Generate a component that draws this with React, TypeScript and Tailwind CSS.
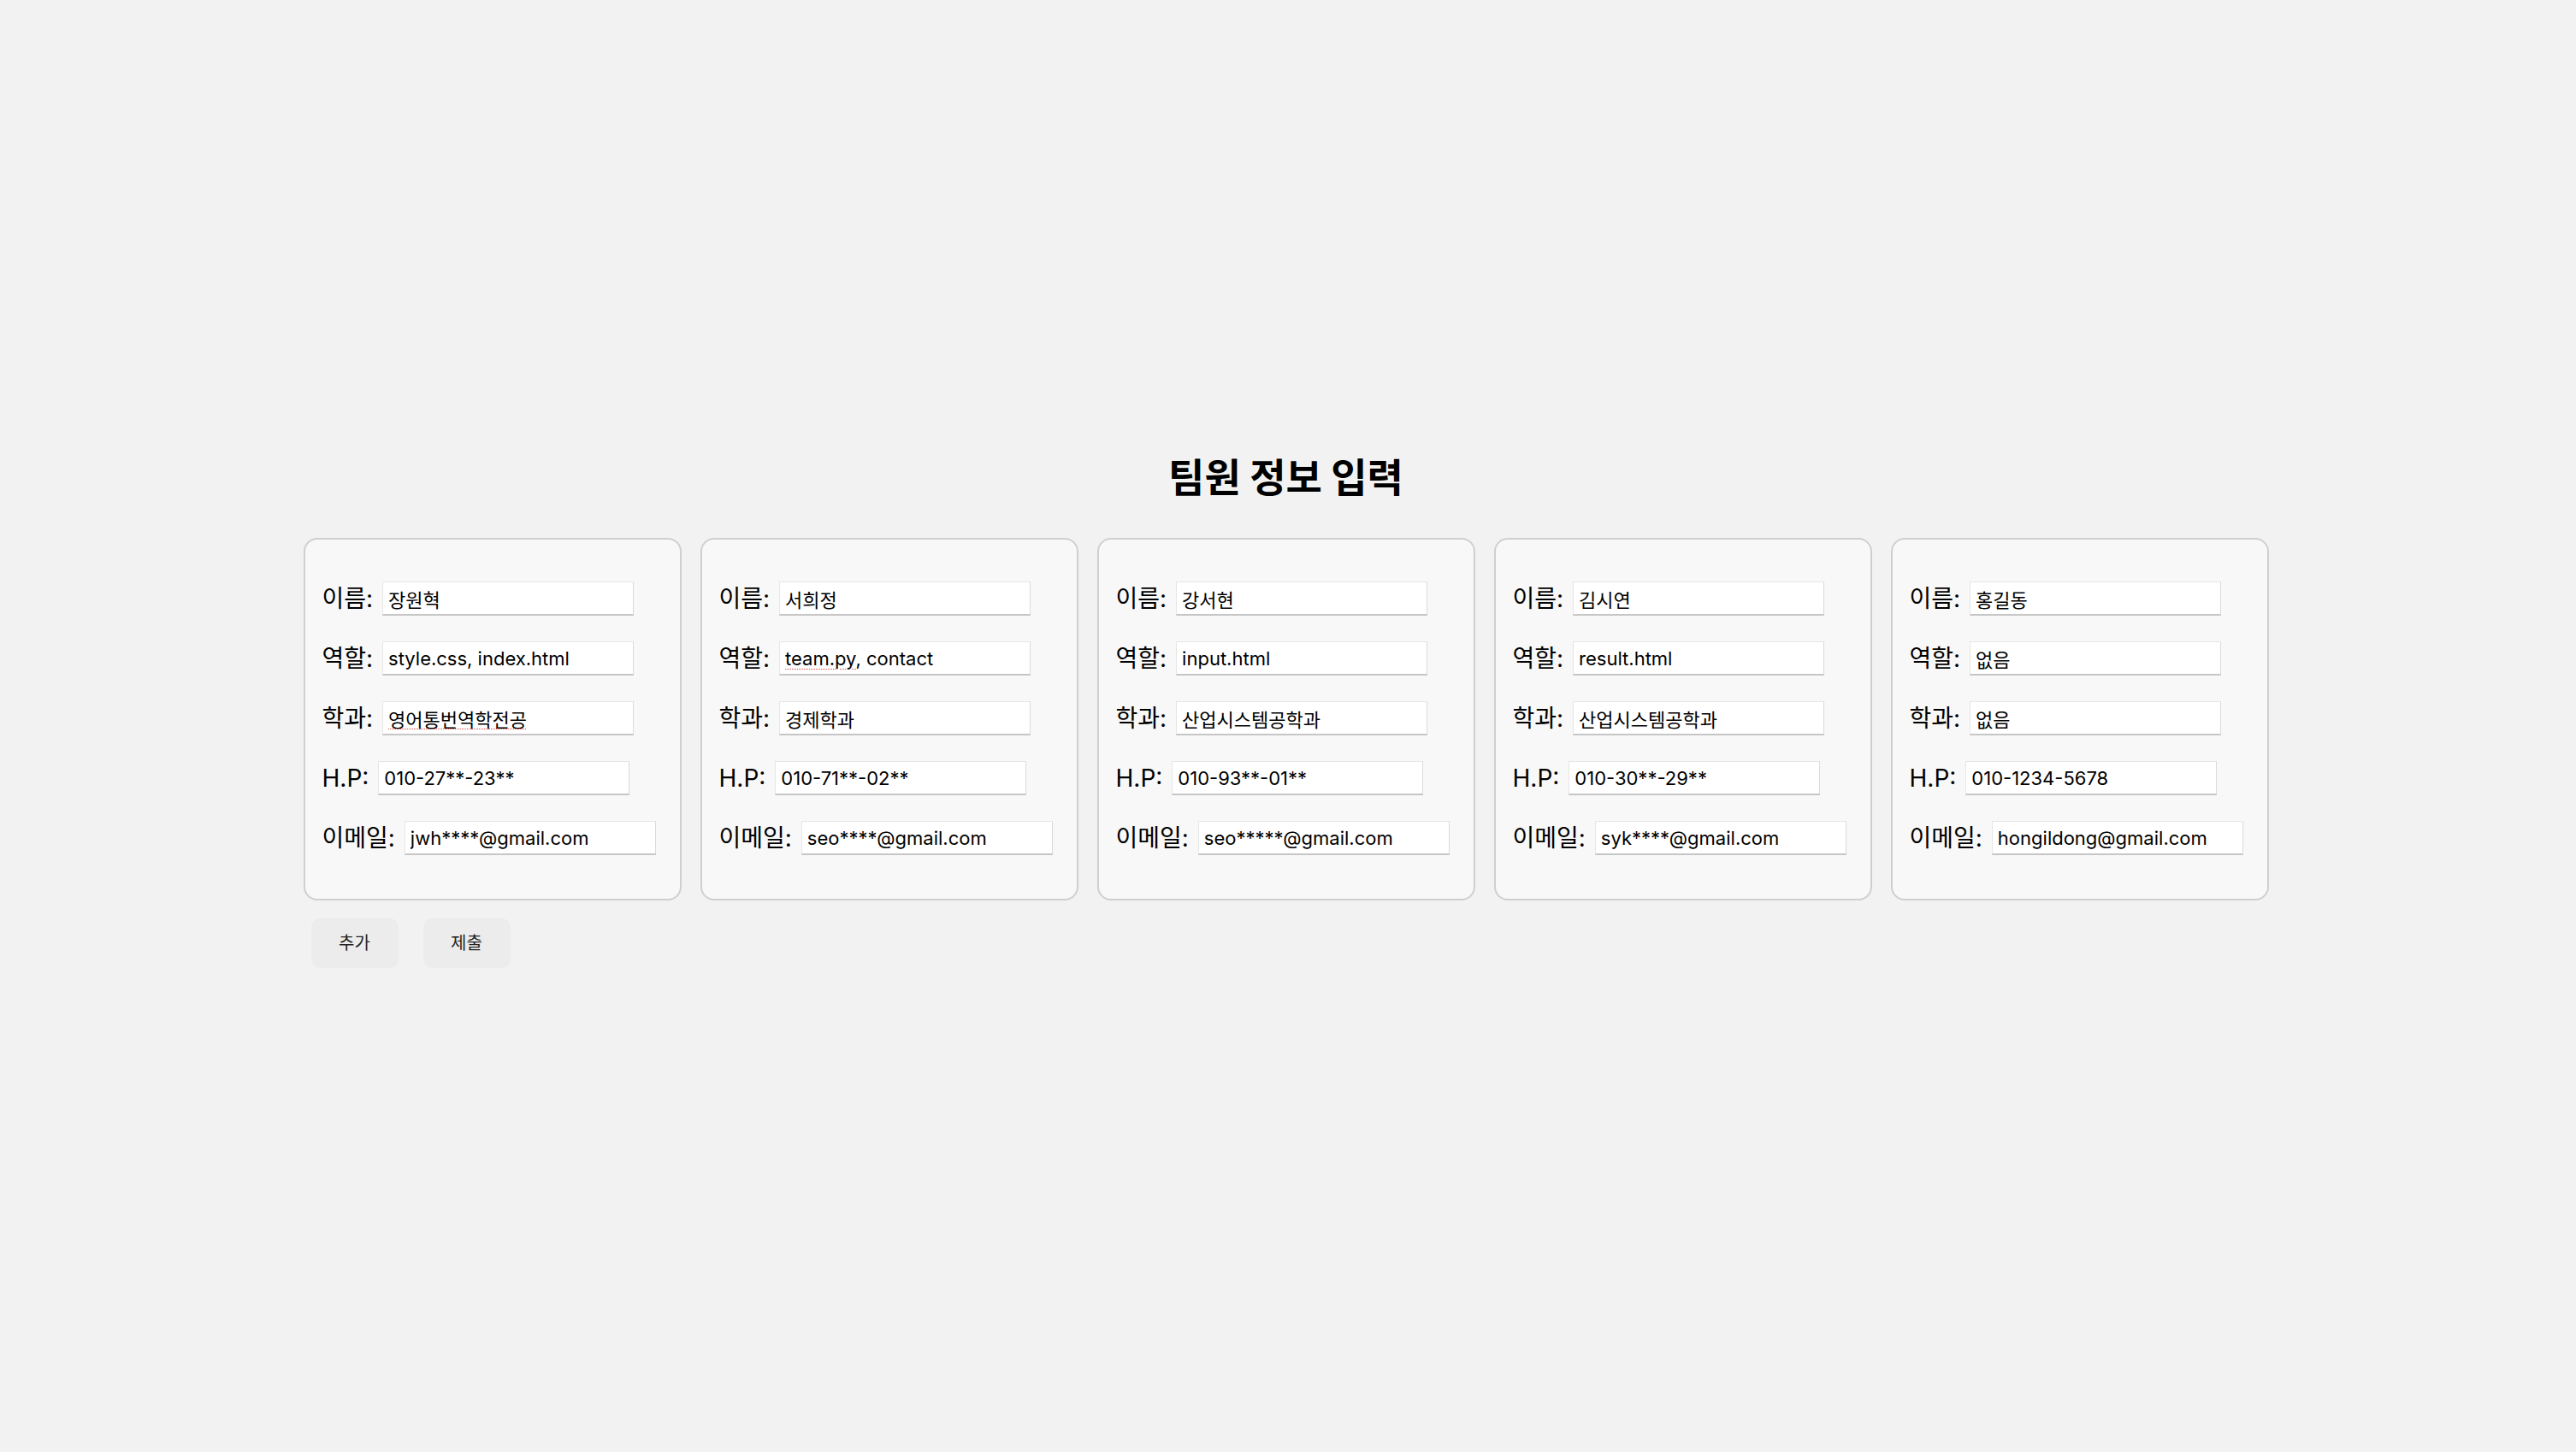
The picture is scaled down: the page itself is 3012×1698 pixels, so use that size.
import React from "react";

type Member = {
  name: string;
  role: string;
  major: string;
  phone: string;
  email: string;
  // fields the browser marked with a spell-check squiggle
  flagged?: "role" | "major";
};

const MEMBERS: Member[] = [
  {
    name: "장원혁",
    role: "style.css, index.html",
    major: "영어통번역학전공",
    phone: "010-27**-23**",
    email: "jwh****@gmail.com",
    flagged: "major",
  },
  {
    name: "서희정",
    role: "team.py, contact",
    major: "경제학과",
    phone: "010-71**-02**",
    email: "seo****@gmail.com",
    flagged: "role",
  },
  {
    name: "강서현",
    role: "input.html",
    major: "산업시스템공학과",
    phone: "010-93**-01**",
    email: "seo*****@gmail.com",
  },
  {
    name: "김시연",
    role: "result.html",
    major: "산업시스템공학과",
    phone: "010-30**-29**",
    email: "syk****@gmail.com",
  },
  {
    name: "홍길동",
    role: "없음",
    major: "없음",
    phone: "010-1234-5678",
    email: "hongildong@gmail.com",
  },
];

function Field({
  label,
  value,
  squiggle,
}: {
  label: string;
  value: string;
  squiggle?: string;
}) {
  return (
    <div className="flex items-center gap-[11px]">
      <span className="text-[28px] leading-none text-black">{label}</span>
      <div className="relative">
        <input
          type="text"
          defaultValue={value}
          spellCheck={false}
          className="h-[40px] w-[294px] border border-[#e6e6e6] border-r-[#dadada] border-b-2 border-b-[#c6c6c6] bg-white px-[6px] text-[22px] text-black outline-none"
        />
        {squiggle && (
          <span
            aria-hidden="true"
            className="pointer-events-none absolute left-[7px] top-[7px] text-[22px] leading-[26px] text-transparent underline decoration-[#e0443e] decoration-dotted decoration-1 underline-offset-[4px]"
          >
            {squiggle}
          </span>
        )}
      </div>
    </div>
  );
}

function MemberCard({ member }: { member: Member }) {
  return (
    <div className="flex h-[424px] w-[442px] flex-col gap-[30px] rounded-[16px] border-2 border-[#cfcfcf] bg-[#f8f8f8] pl-[20px] pt-[49px]">
      <Field label="이름:" value={member.name} />
      <Field
        label="역할:"
        value={member.role}
        squiggle={member.flagged === "role" ? "team.py" : undefined}
      />
      <Field
        label="학과:"
        value={member.major}
        squiggle={member.flagged === "major" ? member.major : undefined}
      />
      <Field label="H.P:" value={member.phone} />
      <Field label="이메일:" value={member.email} />
    </div>
  );
}

export default function App() {
  return (
    <div className="min-h-screen bg-[#f2f2f2] pr-[5px] pt-[526px] font-['Inter','Noto_Sans_CJK_KR',sans-serif]">
      <div className="mx-auto w-[2298px]">
        <h1 className="text-center font-['Noto_Sans_CJK_KR',sans-serif] text-[46px] font-bold leading-[58px] text-black">
          팀원 정보 입력
        </h1>

        <div className="mt-[45px] flex gap-[22px]">
          {MEMBERS.map((m) => (
            <MemberCard key={m.name} member={m} />
          ))}
        </div>

        <div className="ml-[9px] mt-[21px] flex gap-[29px]">
          <button className="h-[58px] w-[102px] rounded-[10px] bg-[#ececec] text-[20px] text-[#222]">
            추가
          </button>
          <button className="h-[58px] w-[102px] rounded-[10px] bg-[#ececec] text-[20px] text-[#222]">
            제출
          </button>
        </div>
      </div>
    </div>
  );
}
